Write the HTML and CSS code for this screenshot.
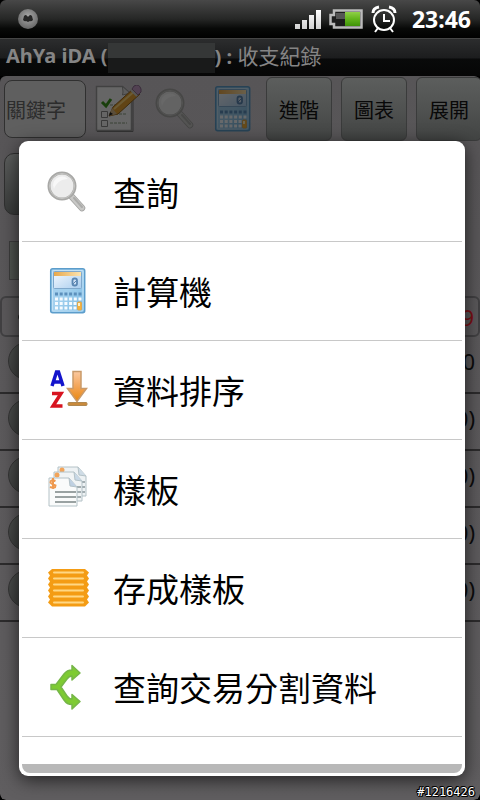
FILE: index.html
```html
<!DOCTYPE html>
<html lang="zh-Hant">
<head>
<meta charset="utf-8">
<meta name="viewport" content="width=device-width, initial-scale=1">
<title>AhYa iDA</title>
<link rel="stylesheet" href="styles.css">
</head>
<body>
<svg class="defs" aria-hidden="true">
  <defs>
    <linearGradient id="blue" x1="0" y1="0" x2="1" y2="1"><stop offset="0" stop-color="#a9d2f0"/><stop offset=".5" stop-color="#a2d0ee"/><stop offset="1" stop-color="#74b6e2"/></linearGradient>
    <linearGradient id="lcd" x1="0" y1="0" x2="1" y2="1"><stop offset="0" stop-color="#f6faff"/><stop offset="1" stop-color="#a9cdee"/></linearGradient>
    <linearGradient id="gold" x1="0" y1="0" x2="1" y2="0"><stop offset="0" stop-color="#e8a84c"/><stop offset="1" stop-color="#fbe3b0"/></linearGradient>
    <linearGradient id="arrow" x1="0" y1="0" x2="0" y2="1"><stop offset="0" stop-color="#fbc9a0"/><stop offset=".5" stop-color="#f3a558"/><stop offset="1" stop-color="#e8860c"/></linearGradient>
    <linearGradient id="charge" x1="0" y1="0" x2="0" y2="1"><stop offset="0" stop-color="#8fd047"/><stop offset=".5" stop-color="#62b41c"/><stop offset="1" stop-color="#3f9208"/></linearGradient>
    <linearGradient id="bars" x1="0" y1="0" x2="0" y2="1"><stop offset="0" stop-color="#fff"/><stop offset="1" stop-color="#cfcfcf"/></linearGradient>
    <radialGradient id="ball" cx=".5" cy=".4" r=".6"><stop offset="0" stop-color="#aaa"/><stop offset="1" stop-color="#666"/></radialGradient>
    <symbol id="lens" viewBox="0 0 48 48">
      <path d="M28 29 38 40" stroke="#a2a2a0" stroke-width="6.500" stroke-linecap="round"/>
      <path d="M28 29 38 40" stroke="#c8c8c6" stroke-width="5" stroke-linecap="round"/>
      <path d="M30 30 38 39" stroke="#acacaa" stroke-width="2" stroke-linecap="round"/>
      <circle cx="18" cy="18" r="13" fill="#ececec" stroke="#a8a8a6" stroke-width="3"/>
      <circle cx="18" cy="18" r="12.500" fill="none" stroke="#c6c6c4" stroke-width="1"/>
      <path d="M9 17a9 9 0 0 1 15-6c-7 0-12 4-14 10z" fill="#f8f8f8"/>
    </symbol>
    <symbol id="calc" viewBox="0 0 48 48">
      <rect x="6.700" y="1.700" width="34" height="44" rx="2" fill="url(#blue)" stroke="#5c9dcb" stroke-width="1.500"/>
      <rect x="8.500" y="3.500" width="30.500" height="40.500" rx="1" fill="none" stroke="#c3e2f6"/>
      <rect x="9.500" y="4.500" width="28" height="17" rx="1" fill="url(#lcd)" stroke="#7fa8cc"/>
      <path d="M10 5h27v4H10z" fill="url(#gold)"/>
      <rect x="28.500" y="11.500" width="4.500" height="7" rx="2" fill="#cfe0f4" stroke="#5a86b2" stroke-width="1.800"/><path d="m29 17 4-4" stroke="#5a86b2"/>
      <path d="M11 27h27" stroke="#5c90bc" stroke-width="3" stroke-dasharray="3 1.700"/>
      <path d="M11 32h27M11 36.500h18M11 41h18" stroke="#f6fbff" stroke-width="3" stroke-dasharray="3 1.700"/>
      <path d="M29.500 36.500h3M29.500 41h3" stroke="#f6fbff" stroke-width="3"/>
      <rect x="33.500" y="35" width="4" height="8" rx="1" fill="#f4b23c" stroke="#e0a850"/><path d="M34 36h2v3h-2z" fill="#fff0c4"/>
    </symbol>
  </defs>
</svg>
<div class="screen">
  <header class="status">
    <svg class="status-ball" width="20" height="20" viewBox="0 0 20 20"><circle cx="10" cy="10" r="10" fill="url(#ball)"/><path d="M6 7q2-2 3 0 1 1 2 0 1-2 3 0l1 4q-2 2-3 1l-2 1-2-1q-1 1-3-1z" fill="#262626"/></svg>
    <svg width="26" height="20" viewBox="0 0 26 20"><path d="M0 15h5v5H0zM7 11h5v9H7zM14 6h5v14h-5zM21 1h5v19h-5z" fill="url(#bars)"/></svg>
    <svg width="34" height="20" viewBox="0 0 34 20"><path d="M5 1.500h27.500v17H5V15H1.500V6H5z" fill="#1d1d1d" stroke="#bbb" stroke-width="2.500"/><path d="M16 3h15v14H16z" fill="url(#charge)"/><path d="M7 4h9v6H7z" fill="#555"/></svg>
    <svg width="26" height="28" viewBox="0 0 26 28" fill="none" stroke="#fff" stroke-width="2"><circle cx="13" cy="15" r="10"/><path d="M13 9v7h6M7 23l-3 4M19 23l3 4"/><path d="M2 8q0-5 6-6M24 8q0-5-6-6" stroke-width="3"/></svg>
    <time class="clock">23:46</time>
  </header>
  <h1 class="title"><span>AhYa iDA (</span><span class="mosaic"></span><span>) : <span class="title-cjk">收支紀錄</span></span></h1>
  <main class="page">
    <div class="toolbar">
      <input class="keyword" type="text" placeholder="關鍵字" aria-label="關鍵字">
      <button class="tool" aria-label="記錄"><svg width="48" height="48" viewBox="0 0 48 48">
        <path d="M1.500 1.500h26l9 8v36h-35z" fill="#f4f4f4" stroke="#9a9a9a" stroke-width="1.500"/><path d="M27.500 2q1 6 0 8 4-2 9 0" fill="#ddd" stroke="#999"/>
        <path d="M2 46.500h36V10" fill="none" stroke="#777"/>
        <path d="m7 17 4 4 5-7" fill="none" stroke="#3c961d" stroke-width="3"/><path d="M6.500 26.500h6v6h-6zM6.500 35.500h6v6h-6z" fill="none" stroke="#888"/>
        <path d="M15 20h14M20 29h12M15 38h17" stroke="#8a9a80" stroke-dasharray="3 1"/>
        <path d="m14 31 4-9L39 3l6 6-22 20z" fill="#e7a331" stroke="#97661c"/><path d="m19 24 22-19" stroke="#ffd77a" stroke-width="2"/><path d="m14 31 3-8 5 6z" fill="#d9b98a"/><path d="m14 31 1-4 3 2z" fill="#222"/>
        <path d="m37 4 2-3q5-3 7 3v3l-3 3z" fill="#c49ac4" stroke="#87698a"/><path d="m36 5 6 6" stroke="#ccc" stroke-width="2"/>
      </svg></button>
      <button class="tool" aria-label="查詢"><svg width="48" height="48" viewBox="0 0 48 48"><use href="#lens" width="48" height="48"/></svg></button>
      <button class="tool" aria-label="計算機"><svg width="48" height="48"><use href="#calc"/></svg></button>
      <button class="key">進階</button>
      <button class="key">圖表</button>
      <button class="key">展開</button>
    </div>
    <div class="picker"><button class="drop" aria-label="選擇"></button></div>
    <div class="marker"><span class="thumb"></span></div>
    <div class="total"><span class="dot"></span><span>9</span></div>
    <ul class="records">
      <li><span class="knob"></span><span>0</span></li>
      <li><span class="knob"></span><span>0)</span></li>
      <li><span class="knob"></span><span>0)</span></li>
      <li><span class="knob"></span><span>0)</span></li>
      <li><span class="knob"></span><span>0)</span></li>
    </ul>
  </main>
  <div class="dialog" role="dialog" aria-label="選單">
    <div class="menu">
      <button class="item"><svg width="48" height="48" viewBox="0 0 48 48"><use href="#lens" width="48" height="48"/></svg>查詢</button>
      <button class="item"><svg width="48" height="48"><use href="#calc"/></svg>計算機</button>
      <button class="item"><svg width="48" height="48" viewBox="0 0 48 48">
        <path d="m8 20 4.500-14h2L19 20M10 16h7" fill="none" stroke="#1414cc" stroke-width="3.500"/>
        <path d="M8 27.500h9L9 40h9.500" fill="none" stroke="#d81420" stroke-width="3.500"/>
        <path d="M29 5.500h8v17h5.500L33 35.500 23.500 22.500H29z" fill="url(#arrow)" stroke="#c99a6a" stroke-width="1.500"/><rect x="24" y="36.500" width="19" height="3" rx="1" fill="#c98a3c" stroke="#b08850"/>
      </svg>資料排序</button>
      <button class="item"><svg width="48" height="48" viewBox="0 0 48 48">
        <g stroke="#b4c2c7"><path d="M14 2h20l8 9v20H14z" fill="#eef2f4"/><path d="m34 2 1 8 7 1" fill="#cfdce6"/><path d="M36 17h5M36 22h5M36 27h5" stroke="#8a969a" stroke-width="1.500"/><circle cx="18" cy="5" r="2.500" fill="#f2a45a" stroke="none"/>
        <path d="M10 7h20l8 9v20H10z" fill="#f1f4f5"/><path d="m30 7 1 8 7 1" fill="#c8d8e6"/><path d="M33 22h4M33 27h4M33 32h4" stroke="#8a969a" stroke-width="1.500"/><circle cx="13" cy="10" r="2.500" fill="#f2a45a" stroke="none"/>
        <path d="M5 13h20l8 9v19H5z" fill="#fafbfb"/><path d="m25 13 1 8 7 1" fill="#bfd0e2"/></g>
        <path d="M11 27h21M11 32h21M11 37h21" stroke="#9aa2a2" stroke-width="1.800"/><path d="M11.500 16q-5-2-5 1.500 0 1 5 3 0 3.500-5.500 1.500M9 13v11" fill="none" stroke="#ef9a50" stroke-width="2"/>
      </svg>樣板</button>
      <button class="item"><svg width="48" height="48" viewBox="0 0 48 48">
        <path d="M8 5h33l4 3.500-2 3 2 3-2 3 2 3-2 3 2 3-2 3 2 3-2 3 2 3-4 4H8l-4-4 2-3-2-3 2-3-2-3 2-3-2-3 2-3-2-3 2-3-2-3z" fill="#f49c14"/>
        <path d="M10 8.500h29M10 14.500h29M10 20.500h29M10 26.500h29M10 32.500h29M10 38.500h29" stroke="#ffd784" stroke-width="2" stroke-linecap="round"/>
      </svg>存成樣板</button>
      <button class="item"><svg width="48" height="48" viewBox="0 0 48 48">
        <path d="M7 21.500h5L20 11q3-4 8-4V2.500L36 10l-8 7v-4q-3 0-5 3l-6 8 6 9q2 3 5 3v-4.500l8 7-8 7.500v-4.500q-5 0-8-4.500l-7-10.500H7z" fill="#7ecb32" stroke="#76b648" stroke-width="1.500" stroke-linejoin="round"/>
      </svg>查詢交易分割資料</button>
    </div>
    <div class="dialog-foot"></div>
  </div>
  <div class="stamp">#1216426</div>
</div>
</body>
</html>
```

FILE: styles.css
```css
* { box-sizing: border-box; }
body {
  margin: 0;
  background: #000;
  font-family: "Noto Sans", "Noto Sans CJK TC", sans-serif;
}
button { font-family: inherit; margin: 0; border: 0; background: none; padding: 0; }
svg { flex: none; fill: none; }
.defs { position: absolute; width: 0; height: 0; }
.screen {
  position: relative;
  display: flex;
  flex-direction: column;
  min-height: 100vh;
  overflow: hidden;
  border-radius: 6px;
}
.status {
  display: flex;
  align-items: center;
  gap: 8px;
  height: 38px;
  padding: 0 9px 0 18px;
  background: linear-gradient(#484848, #262726 50%, #080908 75%, #000);
}
.status-ball { margin-right: auto; }
.clock {
  margin-left: 7px;
  color: #fff;
  font-size: 23px;
  font-weight: 700;
  line-height: 38px;
}
.title {
  display: flex;
  align-items: center;
  height: 38px;
  margin: 0;
  padding: 0 6px;
  border-top: 1px solid #454545;
  background: linear-gradient(#2c2d2e, #1c1d1e 50%, #090a0a 55%, #060606);
  color: #858585;
  font-size: 20px;
  line-height: 32px;
  white-space: nowrap;
}
.title > span { margin-bottom: 3px; }
.title .title-cjk { font-family: "Noto Sans CJK TC", sans-serif; font-size: 21px; font-weight: 400; }
.title .mosaic {
  width: 107px;
  height: 30px;
  margin-bottom: 0;
  background: linear-gradient(#353737 50%, #191a1a 50%);
}
.page {
  flex: 1;
  background: linear-gradient(#575557, #605e60);
  border-radius: 6px;
}
.toolbar {
  display: flex;
  align-items: center;
  gap: 9px;
  height: 66px;
  padding-left: 4px;
  overflow: hidden;
}
.keyword {
  flex: none;
  width: 82px;
  height: 58px;
  padding: 0 0 0 1px;
  border: 1px solid #303030;
  border-radius: 8px;
  background: #5f5f5f;
  font-family: "Noto Sans CJK TC", sans-serif;
  font-size: 20px;
}
.keyword::placeholder { color: #2c2c2c; opacity: 1; }
.tool { flex: none; width: 48px; height: 48px; filter: brightness(0.42); }
.key {
  flex: none;
  width: 66px;
  height: 64px;
  border: 1px solid #3a3b3b;
  border-radius: 6px;
  background: linear-gradient(#5c5e5d, #505251 50%, #424443);
  color: #080808;
  font-size: 20px;
}
.picker { padding: 11px 4px 0; }
.drop {
  display: block;
  width: 100px;
  height: 62px;
  border: 1px solid #303030;
  border-radius: 10px;
  background: linear-gradient(#5c5e5d, #383a39);
}
.marker { padding: 26px 9px 16px; }
.thumb {
  display: block;
  width: 40px;
  height: 39px;
  border: 1px solid #3c3c3c;
  background: linear-gradient(90deg, #505550, #303630);
}
.total {
  display: flex;
  align-items: center;
  justify-content: space-between;
  height: 41px;
  padding: 0 4px 0 16px;
  border: 2px solid #414042;
  border-radius: 6px;
  color: #7a1015;
  font-size: 22px;
}
.dot { width: 6px; height: 6px; border-radius: 50%; background: #222; }
.records { margin: 0; padding: 0; list-style: none; color: #0c0c0c; font-size: 22px; }
.records li {
  display: flex;
  align-items: center;
  justify-content: space-between;
  height: 57px;
  padding: 0 5px 8px 8px;
  border-bottom: 2px solid #2c2b2c;
}
.knob {
  width: 38px;
  height: 38px;
  border: 1px solid #353535;
  border-radius: 50%;
  background: linear-gradient(135deg, #4c4e4d, #343635);
}
.dialog {
  position: absolute;
  top: 141px;
  right: 15px;
  left: 19px;
  padding: 2px 3px 3px;
  border-radius: 9px;
  background: #fff;
  box-shadow: 0 4px 18px rgba(0, 0, 0, 0.65);
}
.menu { display: flex; flex-direction: column; padding-bottom: 27px; }
.item {
  display: flex;
  align-items: center;
  gap: 21px;
  height: 99px;
  padding-left: 22px;
  border-bottom: 1px solid #c8c8c8;
  color: #000;
  font-family: "Noto Sans CJK TC", sans-serif;
  font-size: 33px;
  line-height: 48px;
  text-align: left;
  white-space: nowrap;
}
.dialog-foot { height: 9px; border-radius: 0 0 8px 8px; background: #b8b8b8; }
.stamp {
  position: absolute;
  right: 5px;
  bottom: 0;
  color: #fff;
  font-family: "DejaVu Sans Mono", monospace;
  font-size: 12px;
  line-height: 16px;
  text-shadow: 1px 0 #000, -1px 0 #000, 0 1px #000, 0 -1px #000, 1px 1px #000, -1px -1px #000;
}
```
